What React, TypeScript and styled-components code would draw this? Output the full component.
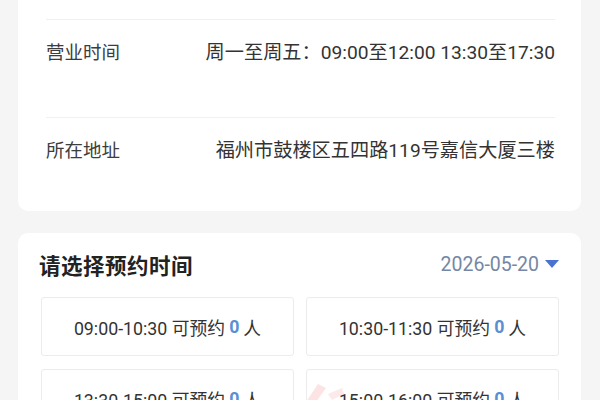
import React from "react";
import styled, { createGlobalStyle } from "styled-components";

const Global = createGlobalStyle`
  html, body { margin: 0; padding: 0; background: #f5f5f5; }
  body { font-family: Roboto, "Noto Sans CJK SC", sans-serif; }
  * { box-sizing: border-box; }
`;

const Page = styled.div`
  width: 600px;
  height: 400px;
  overflow: hidden;
  position: relative;
  background: #f5f5f5;
  padding: 0 19px 0 18px;
  display: flex;
  flex-direction: column;
  gap: 22px;
`;

const InfoCard = styled.div`
  background: #ffffff;
  border-radius: 0 0 10px 10px;
  padding: 19px 26px 0 28px;
  height: 211px;
  flex-shrink: 0;
`;

const InfoRow = styled.div<{ $h: number }>`
  height: ${(p) => p.$h}px;
  border-top: 1px solid #f0f0f0;
  display: flex;
  justify-content: space-between;
  align-items: center;
  align-content: flex-start;
  padding-top: 20px;
  align-items: flex-start;
  font-family: Roboto, "Noto Sans CJK SC", sans-serif;
  line-height: 26px;
  color: #3a3a3a;
`;

const Label = styled.span`
  font-size: 18.5px;
  color: #3d3d3d;
  white-space: nowrap;
`;

const Value = styled.span`
  font-size: 19.2px;
  color: #333;
  white-space: nowrap;
  text-align: right;
`;

const BookCard = styled.div`
  background: #ffffff;
  border-radius: 10px;
  padding: 17px 22px 20px 21px;
  flex: 1;
`;

const Header = styled.div`
  display: flex;
  justify-content: space-between;
  align-items: center;
  height: 28px;
  margin-bottom: 19px;
`;

const Title = styled.div`
  font-family: "Noto Sans CJK SC", sans-serif;
  font-size: 21.5px;
  font-weight: 700;
  color: #222;
  letter-spacing: 0.5px;
`;

const DatePick = styled.div`
  display: flex;
  align-items: center;
  gap: 6px;
  font-family: Roboto, "Noto Sans", sans-serif;
  font-size: 19.5px;
  color: #7587a5;
`;

const Grid = styled.div`
  display: grid;
  grid-template-columns: 1fr 1fr;
  column-gap: 12px;
  row-gap: 13px;
  padding: 0 0 0 2px;
`;

const Slot = styled.div`
  height: 59px;
  border: 1px solid #ececec;
  border-radius: 3px;
  display: flex;
  align-items: center;
  justify-content: center;
  font-family: Roboto, "Noto Sans CJK SC", sans-serif;
  font-size: 17.8px;
  color: #333;
  white-space: nowrap;
`;

const Count = styled.b`
  color: #5b8fd3;
  font-weight: 700;
  margin: 0 4px;
`;

const Watermark = styled.svg`
  position: absolute;
  left: 302px;
  top: 378px;
  opacity: 0.18;
`;

const slots = ["09:00-10:30", "10:30-11:30", "13:30-15:00", "15:00-16:00"];

export default function App() {
  return (
    <>
      <Global />
      <Page>
        <InfoCard>
          <InfoRow $h={98}>
            <Label>营业时间</Label>
            <Value>周一至周五：09:00至12:00 13:30至17:30</Value>
          </InfoRow>
          <InfoRow $h={93}>
            <Label>所在地址</Label>
            <Value>福州市鼓楼区五四路119号嘉信大厦三楼</Value>
          </InfoRow>
        </InfoCard>
        <BookCard>
          <Header>
            <Title>请选择预约时间</Title>
            <DatePick>
              2026-05-20
              <svg width="14" height="9" viewBox="0 0 14 9">
                <path d="M0 0 H14 L7 8 Z" fill="#4a72d1" />
              </svg>
            </DatePick>
          </Header>
          <Grid>
            {slots.map((s) => (
              <Slot key={s}>
                {s} 可预约<Count>0</Count>人
              </Slot>
            ))}
          </Grid>
        </BookCard>
        <Watermark width="46" height="24" viewBox="0 0 46 24">
          <path d="M4 24 L16 6 L24 10 L14 24 Z" fill="#f07070" />
          <path d="M26 16 L40 10 L42 16 L30 22 Z" fill="#f49090" />
        </Watermark>
      </Page>
    </>
  );
}
